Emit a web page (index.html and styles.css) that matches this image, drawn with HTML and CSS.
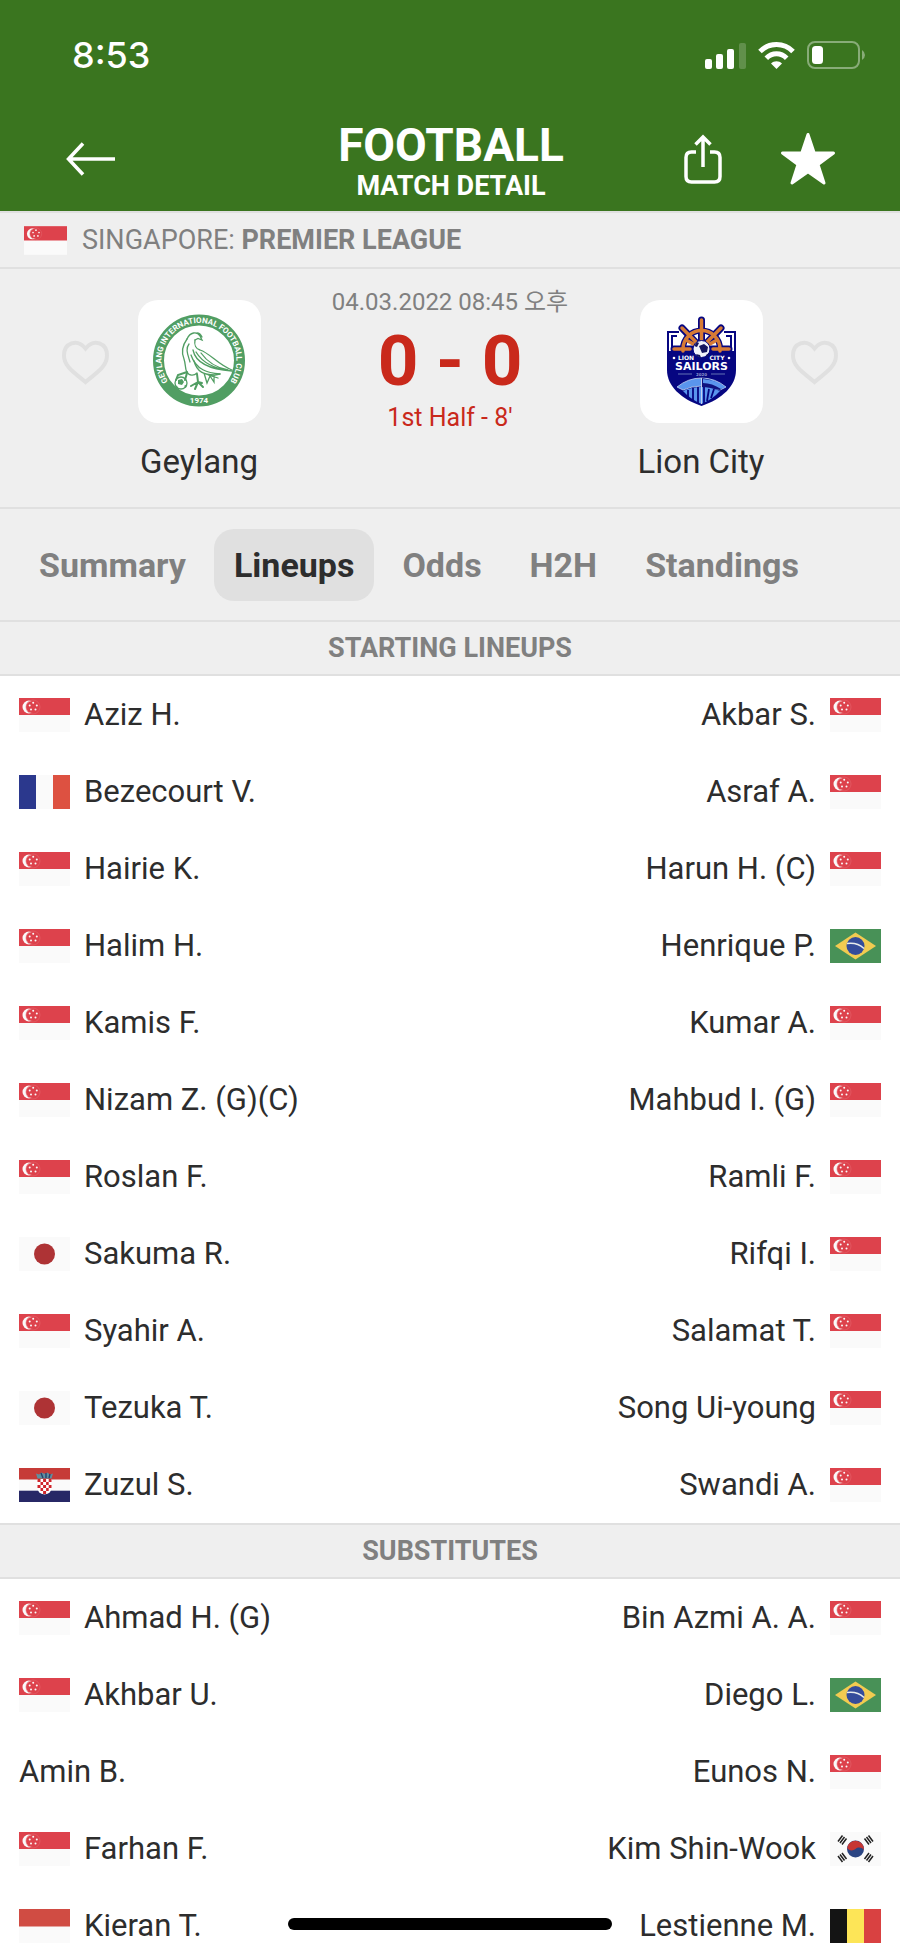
FILE: index.html
```html
<!DOCTYPE html>
<html lang="en">
<head>
  <meta charset="UTF-8">
  <meta name="viewport" content="width=device-width, initial-scale=1.0">
  <title>Geylang - Lion City</title>
  <link rel="stylesheet" href="styles.css">
</head>
<body>
  <!-- Flags -->
  <svg class="sprite" aria-hidden="true">
    <symbol id="sg" viewBox="0 0 51 34">
      <rect width="51" height="34" fill="#fafafa"/>
      <rect width="51" height="17" fill="#dd424c"/>
      <circle cx="10" cy="9" r="6.500" fill="#fafafa"/>
      <circle cx="13" cy="9" r="6" fill="#dd424c"/>
      <circle cx="14" cy="9" r="7" fill="none" stroke="#e4636b" stroke-width=".6"/>
      <g fill="#fafafa">
        <circle cx="14.2" cy="4.8" r="1"/>
        <circle cx="10.7" cy="7.5" r="1"/>
        <circle cx="17.8" cy="7.5" r="1"/>
        <circle cx="12" cy="11.6" r="1"/>
        <circle cx="16.5" cy="11.6" r="1"/>
      </g>
    </symbol>
    <symbol id="fr" viewBox="0 0 51 34">
      <rect width="51" height="34" fill="#fafafa"/>
      <rect width="17" height="34" fill="#2b388d"/>
      <rect x="34" width="17" height="34" fill="#dd5141"/>
    </symbol>
    <symbol id="jp" viewBox="0 0 51 34">
      <rect width="51" height="34" fill="#fafafa"/>
      <circle cx="25.5" cy="17" r="10.5" fill="#ae3335"/>
    </symbol>
    <symbol id="hr" viewBox="0 0 51 34">
      <rect width="51" height="34" fill="#fafafa"/>
      <rect width="51" height="11.5" fill="#c63b38"/>
      <rect y="22.7" width="51" height="11.3" fill="#272866"/>
      <path d="M17 5.5l3 1 2.5-2 3 1.2 3-1.2 2.5 2 3-1-1.5 5h-14z" fill="#5f8f9f"/>
      <path d="M22 5l2 5M27 5v5M31 6l-1 4" stroke="#27406f" stroke-width="1.4"/>
      <path d="M18.500 11h14v9q0 5.500-7 6.500q-7-1-7-6.500z" fill="#fff"/>
      <path d="M18.500 11h3v3h-3zM24.100 11h3v3h-3zM29.700 11h2.800v3h-2.800zM21.500 14h2.600v3h-2.600zM27.100 14h2.600v3h-2.600zM18.500 17h3v3h-3zM24.100 17h3v3h-3zM29.700 17h2.800v3h-2.800zM21.500 20h2.600v3h-2.600zM27.100 20h2.600v3h-2.600zM24.100 23h3v3h-3z" fill="#d0252b"/>
    </symbol>
    <symbol id="br" viewBox="0 0 51 34">
      <rect width="51" height="34" fill="#489157"/>
      <path d="M25.500 3.500L46 17 25.500 30.500 5 17z" fill="#f2cb51"/>
      <circle cx="25.500" cy="17" r="9" fill="#344c9b"/>
      <path d="M17 14.500q10-1.500 17 5" fill="none" stroke="#e8ecec" stroke-width="1.600"/>
    </symbol>
    <symbol id="kr" viewBox="0 0 51 34">
      <rect width="51" height="34" fill="#fafafa"/>
      <circle cx="25.500" cy="17" r="8.500" fill="#2b4583"/>
      <path d="M18.200 12.800a8.500 8.500 0 0 1 15.700 5.200c-2.500-3-6-3-8.400-1s-6.500 2-8.300-1z" fill="#c63633"/>
      <g stroke="#222" stroke-width="1.500">
        <path d="M8 9.500l4.500-6M10 11l4.500-6M12 12.500l4.500-6"/>
        <path d="M43 9.500l-4.500-6M41 11l-4.500-6M39 12.500l-4.500-6"/>
        <path d="M8 24l4.500 6M10 22.500l4.500 6M12 21l4.500 6"/>
        <path d="M43 24l-4.500 6M41 22.500l-4.500 6M39 21l-4.500 6"/>
      </g>
    </symbol>
    <symbol id="id" viewBox="0 0 51 34">
      <rect width="51" height="34" fill="#fafafa"/>
      <rect width="51" height="17.500" fill="#d04c43"/>
    </symbol>
    <symbol id="be" viewBox="0 0 51 34">
      <rect width="17" height="34" fill="#141414"/>
      <rect x="17" width="17" height="34" fill="#fde557"/>
      <rect x="34" width="17" height="34" fill="#d94141"/>
    </symbol>
    <symbol id="heart" viewBox="0 0 47 45">
      <path d="M23.500 8.500C15-2 2 3 2 15.500C2 27 13 33 23.500 42C34 33 45 27 45 15.500C45 3 32-2 23.500 8.500z" fill="none" stroke="#e0e0e0" stroke-width="4"/>
    </symbol>
  </svg>

  <div class="app">
    <header>
      <div class="status-bar">
        <span class="time">8:53</span>
        <div class="status-icons">
          <svg width="41" height="27" viewBox="0 0 41 27" fill="#fff">
            <rect y="17" width="7" height="10" rx="2"/>
            <rect x="11" y="12" width="7" height="15" rx="2"/>
            <rect x="22" y="7" width="7" height="20" rx="2"/>
            <rect x="34" y="1" width="7" height="26" rx="2" opacity=".2"/>
          </svg>
          <svg width="37" height="27" viewBox="0 0 37 27">
            <path d="M2 9.500C11 .2 26 .2 35 9.500" fill="none" stroke="#fff" stroke-width="5"/>
            <path d="M8.300 16.200C14 10.300 23 10.300 28.700 16.200" fill="none" stroke="#fff" stroke-width="5"/>
            <path d="M18.500 27L13 21.500C16 18.500 21 18.500 24 21.500z" fill="#fff"/>
          </svg>
          <svg width="59" height="28" viewBox="0 0 59 28">
            <rect x="1" y="1" width="51" height="26" rx="7" fill="none" stroke="#fff" stroke-width="2" opacity=".4"/>
            <rect x="5" y="5" width="11" height="18" rx="3.500" fill="#fff"/>
            <path d="M55 9q3 2 3 5t-3 5z" fill="#fff" opacity=".4"/>
          </svg>
        </div>
      </div>
      <div class="nav">
        <button class="icon-btn back" aria-label="Back">
          <svg width="49" height="34" viewBox="0 0 49 34" fill="none" stroke="#fff" stroke-width="3.500">
            <path d="M49 17H3M17 1.500L2.500 17L17 32.500"/>
          </svg>
        </button>
        <div class="title">
          <h1>FOOTBALL</h1>
          <p>MATCH DETAIL</p>
        </div>
        <div class="nav-actions">
          <button class="icon-btn" aria-label="Share">
            <svg width="38" height="50" viewBox="0 0 38 50" fill="none" stroke="#fff" stroke-width="3.500">
              <path d="M12 18H7.500Q2 18 2 23.500V42.500Q2 48 7.500 48H30.500Q36 48 36 42.500V23.500Q36 18 30.500 18H26"/>
              <path d="M19 33V3M11.500 10.500L19 3L26.500 10.500"/>
            </svg>
          </button>
          <button class="icon-btn" aria-label="Favourite">
            <svg width="56" height="54" viewBox="0 0 56 54" fill="#fff" stroke="#fff" stroke-width="3" stroke-linejoin="round">
              <path d="M28 2.500L34.200 21H53.500L38 32.500L44 51L28 39.800L12 51L18 32.500L2.500 21H21.800z"/>
            </svg>
          </button>
        </div>
      </div>
    </header>

    <div class="league">
      <svg class="league-flag"><use href="#sg"/></svg>
      <span>SINGAPORE: <strong>PREMIER LEAGUE</strong></span>
    </div>

    <section class="match">
      <button class="icon-btn heart" aria-label="Follow Geylang"><svg width="47" height="45"><use href="#heart"/></svg></button>
      <div class="team">
        <div class="logo">
          <svg width="123" height="123" viewBox="0 0 123 123">
            <circle cx="61" cy="60.500" r="40.500" fill="none" stroke="#519e63" stroke-width="11"/>
            <path id="ring" d="M34.500 87A37.500 37.500 0 1 1 87.500 87" fill="none"/>
            <text class="ring-text"><textPath href="#ring" startOffset="50%">GEYLANG INTERNATIONAL FOOTBALL CLUB</textPath></text>
            <text class="ring-text" x="61" y="103">1974</text>
            <g fill="none" stroke="#519e63" stroke-width="1.300" stroke-linecap="round">
              <path d="M49 39C52 32 59 31 62 36L64 40L60 38.500L57 40M59 33C61 33 63 35 64 37"/>
              <path d="M49 39C44 46 43 52 46 59C48 65 47 70 49 72C51 76 56 76 59 73"/>
              <path d="M51 44C47 49 50 55 52 62M57 40C56 45 58 49 62 50C72 53 80 65 94 70"/>
              <path d="M55 50C57 60 67 69 94 71M58 52C64 62 76 69 94 71M63 53C70 63 80 68 90 70M53 55C58 70 70 73 82 74"/>
              <path d="M56 61C59 72 66 75 77 75L82 74M66 73L69 83L72 76L76 82L76 75M70 75L80 78"/>
              <path d="M49 72L40 75L38 80M49 73L47 80M59 74L60 82L53 86M60 82L57 89M60 82L65 87M60 82L64 83" stroke-width="2"/>
              <circle cx="43" cy="83" r="6"/>
            </g>
            <path d="M40 80l4-1 2 3-2 3-4-1zM37 85l3 2-1 2zM46 86l3-2-1 4z" fill="#519e63"/>
          </svg>
        </div>
        <h2>Geylang</h2>
      </div>
      <div class="result">
        <p class="date">04.03.2022 08:45 오후</p>
        <p class="score">0 - 0</p>
        <p class="period">1st Half - 8'</p>
      </div>
      <div class="team">
        <div class="logo">
          <svg width="123" height="123" viewBox="0 0 123 123">
            <path d="M39 32H28V52M84 32H95V52M32 50V36H37M91 50V36H86" fill="none" stroke="#060681" stroke-width="2"/>
            <path d="M27 51H96V70C96 86 82 99 61.500 106C41 99 27 86 27 70z" fill="#060681"/>
            <g fill="none" stroke-linecap="round">
              <path d="M61.500 20V48M42 28L61 48M81 28L62 48M34 49H89" stroke="#060681" stroke-width="7"/>
              <path d="M43 51V49A18.500 18.500 0 0 1 80 49V51" stroke="#060681" stroke-width="6"/>
              <path d="M43 51V49A18.500 18.500 0 0 1 80 49V51" stroke="#d77b35" stroke-width="3.500"/>
              <path d="M61.500 20V46M42 28L60 46M81 28L63 46M34 49H50M73 49H89M46 40L55 45M77 40L68 45" stroke="#d77b35" stroke-width="3.500"/>
            </g>
            <circle cx="61.500" cy="49" r="8.500" fill="#f0f1fa" stroke="#060681"/>
            <path d="M59 46l5-2 4 3-1 5-5 1zM54 46l3-4 2 1-2 4zM56 54l4 1 1 3-4-2zM66 55l3-2-2 4z" fill="#14145f"/>
            <text class="crest-small" x="46" y="60">LION</text>
            <text class="crest-small" x="77" y="60">CITY</text>
            <circle cx="34" cy="58" r="1.300" fill="#fff"/>
            <circle cx="89" cy="58" r="1.300" fill="#fff"/>
            <text class="crest-name" x="61.500" y="70">SAILORS</text>
            <path d="M38 74H52M71 74H85" stroke="#6272b4"/>
            <text class="crest-year" x="61.500" y="75.500">2020</text>
            <path d="M37 87Q48 78 61.500 78T86 87L80 90Q61 82 43 90z" fill="#5a95ed" stroke="#c3d1ef" stroke-width=".8"/>
            <path d="M61.500 78V87L80 90L83 87Q74 80 61.500 78z" fill="#10127e"/>
            <path d="M63 79Q76 80 85 87L81 89Q72 83 63 83z" fill="#5a95ed"/>
            <path d="M43 91Q61 83 80 91Q73 99 61.500 104Q50 99 43 91z" fill="#5a95ed"/>
            <path d="M48 90V97M53 88V101M58 87V103M64 87V103M69 89L67 101M74 89L71 98" stroke="#060681" stroke-width="1.800"/>
            <path d="M61.500 78V104" stroke="#c3d1ef"/>
          </svg>
        </div>
        <h2>Lion City</h2>
      </div>
      <button class="icon-btn heart" aria-label="Follow Lion City"><svg width="47" height="45"><use href="#heart"/></svg></button>
    </section>

    <nav class="tabs">
      <a href="#summary">Summary</a>
      <a href="#lineups" class="active">Lineups</a>
      <a href="#odds">Odds</a>
      <a href="#h2h">H2H</a>
      <a href="#standings">Standings</a>
    </nav>

    <main id="lineups">
      <h3 class="section-title">STARTING LINEUPS</h3>
      <div class="lineup">
        <ul class="players">
          <li><svg class="flag"><use href="#sg"/></svg>Aziz H.</li>
          <li><svg class="flag"><use href="#fr"/></svg>Bezecourt V.</li>
          <li><svg class="flag"><use href="#sg"/></svg>Hairie K.</li>
          <li><svg class="flag"><use href="#sg"/></svg>Halim H.</li>
          <li><svg class="flag"><use href="#sg"/></svg>Kamis F.</li>
          <li><svg class="flag"><use href="#sg"/></svg>Nizam Z. (G)(C)</li>
          <li><svg class="flag"><use href="#sg"/></svg>Roslan F.</li>
          <li><svg class="flag"><use href="#jp"/></svg>Sakuma R.</li>
          <li><svg class="flag"><use href="#sg"/></svg>Syahir A.</li>
          <li><svg class="flag"><use href="#jp"/></svg>Tezuka T.</li>
          <li><svg class="flag"><use href="#hr"/></svg>Zuzul S.</li>
        </ul>
        <ul class="players away">
          <li><svg class="flag"><use href="#sg"/></svg>Akbar S.</li>
          <li><svg class="flag"><use href="#sg"/></svg>Asraf A.</li>
          <li><svg class="flag"><use href="#sg"/></svg>Harun H. (C)</li>
          <li><svg class="flag"><use href="#br"/></svg>Henrique P.</li>
          <li><svg class="flag"><use href="#sg"/></svg>Kumar A.</li>
          <li><svg class="flag"><use href="#sg"/></svg>Mahbud I. (G)</li>
          <li><svg class="flag"><use href="#sg"/></svg>Ramli F.</li>
          <li><svg class="flag"><use href="#sg"/></svg>Rifqi I.</li>
          <li><svg class="flag"><use href="#sg"/></svg>Salamat T.</li>
          <li><svg class="flag"><use href="#sg"/></svg>Song Ui-young</li>
          <li><svg class="flag"><use href="#sg"/></svg>Swandi A.</li>
        </ul>
      </div>

      <h3 class="section-title">SUBSTITUTES</h3>
      <div class="lineup">
        <ul class="players">
          <li><svg class="flag"><use href="#sg"/></svg>Ahmad H. (G)</li>
          <li><svg class="flag"><use href="#sg"/></svg>Akhbar U.</li>
          <li>Amin B.</li>
          <li><svg class="flag"><use href="#sg"/></svg>Farhan F.</li>
          <li><svg class="flag"><use href="#id"/></svg>Kieran T.</li>
        </ul>
        <ul class="players away">
          <li><svg class="flag"><use href="#sg"/></svg>Bin Azmi A. A.</li>
          <li><svg class="flag"><use href="#br"/></svg>Diego L.</li>
          <li><svg class="flag"><use href="#sg"/></svg>Eunos N.</li>
          <li><svg class="flag"><use href="#kr"/></svg>Kim Shin-Wook</li>
          <li><svg class="flag"><use href="#be"/></svg>Lestienne M.</li>
        </ul>
      </div>
    </main>
    <div class="home-indicator"></div>
  </div>
</body>
</html>
```
FILE: styles.css
```css
* {
  box-sizing: border-box;
  margin: 0;
  padding: 0;
}
body {
  font-family: Roboto, "Noto Sans CJK KR", sans-serif;
  background: #fff;
  color: #2d2d2d;
}
.sprite {
  display: none;
}
.app {
  display: flex;
  flex-direction: column;
  height: 100vh;
  overflow: hidden;
}
.app > * {
  flex-shrink: 0;
}
.icon-btn {
  display: flex;
  border: none;
  background: none;
  cursor: pointer;
}

/* Header */
header {
  background: #3a751f;
  color: #fff;
}
.status-bar {
  display: flex;
  justify-content: space-between;
  align-items: center;
  height: 110px;
  padding: 0 34px 0 72px;
}
.time {
  font-family: Inter, sans-serif;
  font-size: 36px;
  font-weight: 500;
}
.status-icons {
  display: flex;
  align-items: center;
  gap: 12px;
}
.nav {
  display: grid;
  grid-template-columns: 1fr auto 1fr;
  align-items: center;
  height: 101px;
  padding: 0 64px 4px 66px;
}
.title {
  padding-top: 2px;
  text-align: center;
}
.title h1 {
  font-size: 46px;
  line-height: 52px;
}
.title p {
  font-size: 27px;
  font-weight: 700;
  line-height: 30px;
}
.nav-actions {
  display: flex;
  align-items: center;
  justify-content: flex-end;
  gap: 58px;
}

/* League */
.league {
  display: flex;
  align-items: center;
  gap: 15px;
  height: 58px;
  padding: 0 24px;
  background: #efefef;
  border-top: 2px solid #e0e0e0;
  border-bottom: 2px solid #e0e0e0;
  color: #808080;
  font-size: 27px;
}
.league-flag {
  width: 43px;
  height: 29px;
}

/* Match */
.match {
  display: grid;
  grid-template-columns: 47px 180px 1fr 180px 47px;
  height: 240px;
  padding: 18px 62px;
  background: #efefef;
  border-bottom: 2px solid #e0e0e0;
}
.heart {
  margin-top: 53px;
  height: 45px;
}
.team {
  display: flex;
  flex-direction: column;
  align-items: center;
  gap: 17px;
  padding-top: 13px;
}
.logo {
  width: 123px;
  height: 123px;
  background: #fff;
  border-radius: 20px;
}
.team h2 {
  font-size: 33px;
  font-weight: 400;
  line-height: 44px;
}
.ring-text {
  fill: #fff;
  font-size: 8px;
  font-weight: 700;
  text-anchor: middle;
}
.crest-small,
.crest-name,
.crest-year {
  fill: #fff;
  font-family: "DejaVu Sans", sans-serif;
  font-weight: 700;
  text-anchor: middle;
}
.crest-small {
  font-size: 6px;
}
.crest-name {
  font-size: 11px;
}
.crest-year {
  fill: #8d97cc;
  font-size: 4px;
}
.result {
  text-align: center;
}
.result p {
  white-space: nowrap;
}
.date {
  color: #808080;
  font-size: 24px;
  line-height: 30px;
}
.score {
  color: #c9291b;
  font-size: 71px;
  font-weight: 700;
  line-height: 88px;
}
.period {
  color: #c9291b;
  font-size: 25px;
  line-height: 26px;
}

/* Tabs */
.tabs {
  display: flex;
  align-items: center;
  gap: 8px;
  height: 111px;
  padding: 0 19px;
  background: #efefef;
}
.tabs a {
  padding: 0 20px;
  border-radius: 20px;
  color: #808080;
  font-size: 34px;
  font-weight: 700;
  line-height: 72px;
  text-decoration: none;
}
.tabs .active {
  background: #e0e0e0;
  color: #2d2d2d;
}

/* Lineups */
.section-title {
  background: #efefef;
  border-top: 2px solid #e0e0e0;
  border-bottom: 2px solid #e0e0e0;
  color: #808080;
  font-size: 27px;
  line-height: 52px;
  text-align: center;
}
.lineup {
  display: flex;
  justify-content: space-between;
  padding: 0 19px;
}
.players {
  list-style: none;
}
.players li {
  display: flex;
  align-items: center;
  gap: 14px;
  height: 77px;
  font-size: 31px;
}
.away li {
  flex-direction: row-reverse;
}
.flag {
  width: 51px;
  height: 34px;
}
.home-indicator {
  position: fixed;
  bottom: 19px;
  left: 50%;
  width: 36%;
  height: 12px;
  border-radius: 6px;
  background: #000;
  transform: translateX(-50%);
}
```
